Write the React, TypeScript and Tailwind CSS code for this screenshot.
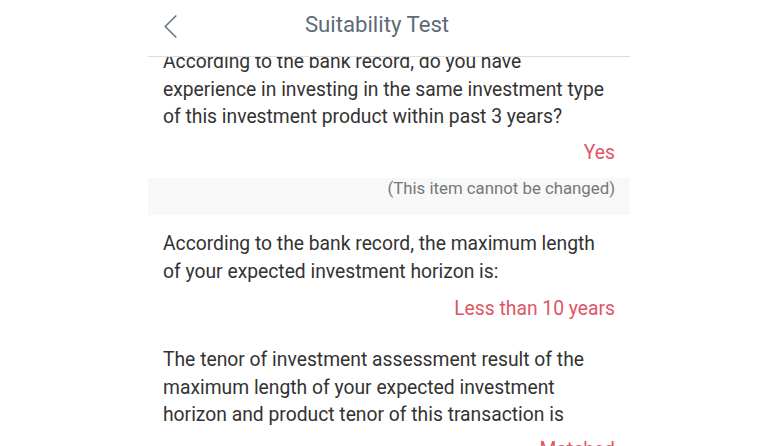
const font = { fontFamily: "Roboto, 'Noto Sans', sans-serif" };

function Question({ text, className = "" }: { text: string; className?: string }) {
  return <p className={`px-[15px] text-[19.3px] leading-[27.5px] text-[#333333] ${className}`}>{text}</p>;
}

function Answer({ text, className = "" }: { text: string; className?: string }) {
  return (
    <p className={`px-[15px] text-right text-[19.3px] leading-[28px] text-[#e05565] ${className}`}>{text}</p>
  );
}

function BackIcon() {
  return (
    <svg width="13" height="23" viewBox="0 0 13 23" fill="none">
      <path d="M11.8 1 L1.2 11.5 L11.8 22" stroke="#6b7884" strokeWidth="1.7" strokeLinecap="round" strokeLinejoin="round" />
    </svg>
  );
}

export default function App() {
  return (
    <div className="h-[446px] w-[771px] overflow-hidden bg-white" style={font}>
      <div className="ml-[148px] flex h-[446px] w-[482px] flex-col">
        {/* Header */}
        <div className="relative z-10 flex h-[57px] shrink-0 items-center border-b border-[#dddddd] bg-white">
          <div className="flex w-[40px] justify-start pb-[3px] pl-[16px]">
            <BackIcon />
          </div>
          <h1 className="flex-1 pb-[6px] text-center text-[22.2px] text-[#5d6b77]">Suitability Test</h1>
          <div className="w-[64px]" />
        </div>

        {/* Content */}
        <div className="-mt-[9px] flex-1">
          <Question text="According to the bank record, do you have experience in investing in the same investment type of this investment product within past 3 years?" />
          <Answer text="Yes" className="mt-[8.5px]" />
          <div className="mt-[11px] h-[37px] bg-[#f8f8f8] px-[15px] text-right text-[16.8px] leading-[20px] text-[#777777]">
            (This item cannot be changed)
          </div>
          <Question
            text="According to the bank record, the maximum length of your expected investment horizon is:"
            className="mt-[15px]"
          />
          <Answer text="Less than 10 years" className="mt-[10px]" />
          <Question
            text="The tenor of investment assessment result of the maximum length of your expected investment horizon and product tenor of this transaction is"
            className="mt-[23px]"
          />
          <Answer text="Matched" className="mt-[7px]" />
        </div>
      </div>
    </div>
  );
}
